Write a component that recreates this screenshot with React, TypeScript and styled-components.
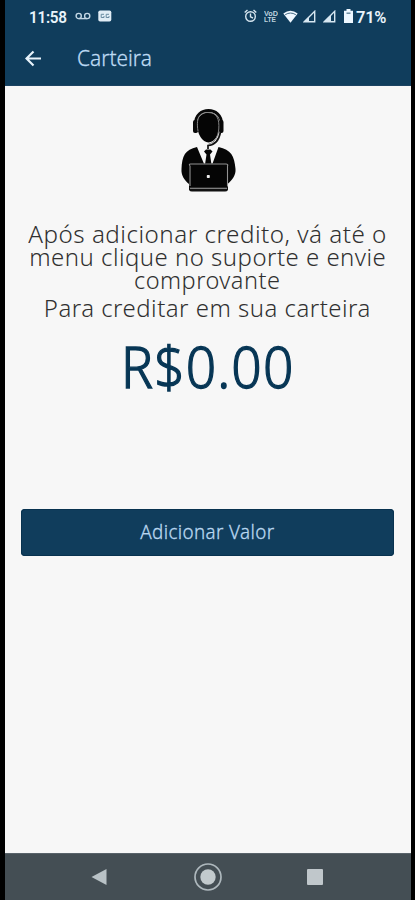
import React from "react";
import styled, { createGlobalStyle } from "styled-components";

const GlobalStyle = createGlobalStyle`
  * { box-sizing: border-box; }
  html, body { margin: 0; background: #000; overflow: hidden; }
  svg { display: block; }
`;

const Phone = styled.div`
  width: 415px;
  height: 900px;
  padding: 0 4px 0 5px;
  background: #000;
  font-family: "Noto Sans", "Open Sans", sans-serif;
`;

const Screen = styled.div`
  height: 100%;
  display: flex;
  flex-direction: column;
  background: #f7f7f7;
`;

const Header = styled.header`
  height: 86px;
  flex: none;
  background: #103d5c;
  border-bottom: 1px solid #1c4362;
`;

const StatusBar = styled.div`
  height: 34px;
  display: flex;
  align-items: center;
  padding: 0 25px 2px 24px;
  color: #e9f4fb;
`;

const StatusText = styled.span<{ $width: number; $scale: number }>`
  width: ${(p) => p.$width}px;
  font: 600 17px/34px Roboto, sans-serif;
  letter-spacing: -0.3px;
  white-space: nowrap;
  transform: translateY(1px) scaleX(${(p) => p.$scale});
  transform-origin: left;
`;

const StatusIcon = styled.svg<{ $gap: number }>`
  flex: none;
  margin-left: ${(p) => p.$gap}px;
`;

const Spacer = styled.div`
  flex: 1;
`;

const TitleBar = styled.div`
  height: 48px;
  display: flex;
  align-items: center;
  padding-left: 20px;
`;

const BackButton = styled.button`
  width: 52px;
  padding: 0;
  border: 0;
  background: none;
`;

const Fitted = styled.span<{ $size: number; $scale: number; $spacing?: number; $stroke?: number; $origin?: string }>`
  display: inline-block;
  font-size: ${(p) => p.$size}px;
  font-weight: 300;
  -webkit-text-stroke: ${(p) => p.$stroke ?? 0}px currentColor;
  letter-spacing: ${(p) => p.$spacing ?? 0}px;
  white-space: nowrap;
  transform: scaleX(${(p) => p.$scale});
  transform-origin: ${(p) => p.$origin ?? "center"};
`;

const Title = styled.h1`
  margin: 0 0 4px;
  line-height: 44px;
  color: #bddaf3;
`;

const Content = styled.main`
  flex: 1;
  display: flex;
  flex-direction: column;
  align-items: center;
  padding: 23px 16px 0 15px;
`;

const Message = styled.p<{ $top: number }>`
  margin: ${(p) => p.$top}px 0 0;
  display: flex;
  flex-direction: column;
  align-items: center;
  line-height: 23px;
  color: #303030;
`;

const Balance = styled.div`
  height: 70px;
  margin-top: 12px;
  line-height: 70px;
  color: #073655;
`;

const AddButton = styled.button`
  width: 373px;
  height: 47px;
  margin-top: 108px;
  padding: 0;
  border: 0;
  border-radius: 4px;
  background: #103d5c;
  box-shadow: inset 0 0 0 1px #08324f;
  color: #b9d7f0;
  font-family: inherit;
  line-height: 46px;
`;

const NavBar = styled.nav`
  height: 47px;
  flex: none;
  display: flex;
  align-items: center;
  background: #444e54;
  border-top: 1px solid #59636a;
  padding-left: 86px;
`;

const NavIcon = styled.svg<{ $gap: number }>`
  margin-left: ${(p) => p.$gap}px;
`;

function SupportAgent() {
  return (
    <svg width="60" height="84" viewBox="178 109 60 84">
      <path d="M197 147 204.500 165H189V184C184 180 181 175 181.500 169C182 156 185 149.500 197 147Z" fill="#060606" />
      <path d="M218.500 147 212 165H227.500V184C232.500 180 236 175 235.500 169C234.500 156 231 149.500 218.500 147Z" fill="#060606" />
      <path d="M206 149.500h4.500l2 2-2.500 3 1.500 10h-6.500l1.500-10-2.500-3Z" fill="#050505" />
      <path d="M195.500 124C195 106 222 106 221.500 124" fill="none" stroke="#080808" strokeWidth="2.800" />
      <rect x="193" y="120" width="5" height="13" rx="2" fill="#080808" />
      <rect x="219" y="120" width="4.500" height="13" rx="2" fill="#080808" />
      <path d="M197 124C197 108.500 220 108.500 220 124C220 134 214.500 142.500 208.500 142.500S197 134 197 124Z" fill="#050505" />
      <path d="M198 131C195.500 116 201 112.500 208 112.500C217 112.500 219.500 119 218.800 129C218 137 214.500 143 208.500 144" fill="none" stroke="#858585" strokeWidth="1" />
      <path d="M220.500 132C219 140 215 145 208 145.500V149" fill="none" stroke="#111" strokeWidth="1.700" />
      <path d="M189 187V166Q188.200 163.500 190.500 163.500H226Q228.500 163.500 227.700 166V187Z" fill="#050505" />
      <path d="M190 186V166Q188.500 164 190.500 164H226Q228.500 164 227.500 166V186" fill="none" stroke="#929292" strokeWidth="1.100" />
      <rect x="206.800" y="175" width="3" height="3" rx=".7" fill="#eee" />
      <path d="M189 187H228V190Q227 191.500 225 191.500H192Q190 191.500 189 190Z" fill="#111" />
      <path d="M190 188.300H227" stroke="#999" strokeWidth="1" />
    </svg>
  );
}

export default function App() {
  return (
    <Phone>
      <GlobalStyle />
      <Screen>
        <Header>
          <StatusBar>
            <StatusText $width={38} $scale={0.9}>11:58</StatusText>
            <StatusIcon $gap={8} width="16" height="10" viewBox="0 0 16 10" fill="none" stroke="#c3d7e5" strokeWidth="1.400">
              <circle cx="3.700" cy="5" r="2.600" />
              <circle cx="12.200" cy="5" r="2.600" />
              <path d="M3.700 7.600h8.500" />
            </StatusIcon>
            <StatusIcon $gap={7} width="14" height="12" viewBox="0 0 14 12">
              <rect x=".3" y=".5" width="13" height="11" rx="1.800" fill="#e1edf5" />
              <path d="M6 4.300H3.200v3.200H6V6M11 4.300H8.200v3.200H11V6" fill="none" stroke="#698ba1" />
            </StatusIcon>
            <Spacer />
            <StatusIcon $gap={0} width="13" height="14" viewBox="0 0 13 14" fill="none" stroke="#d5e5ef" strokeWidth="1.400">
              <circle cx="6.500" cy="7.500" r="4.800" />
              <path d="M.7 3.500 3.500 1M9.500 1l2.800 2.500M6.500 4.500v3.300L9 9" />
            </StatusIcon>
            <StatusIcon $gap={7} width="14" height="13" viewBox="0 0 14 13" fill="#bfd3df">
              <text x="0" y="6" fontFamily="Liberation Sans" fontSize="6.500" fontWeight="700" textLength="14" lengthAdjust="spacingAndGlyphs">VoD</text>
              <text x="0" y="12" fontFamily="Liberation Sans" fontSize="6.500" fontWeight="700" textLength="12" lengthAdjust="spacingAndGlyphs">LTE</text>
            </StatusIcon>
            <StatusIcon $gap={5} width="15" height="13" viewBox="0 0 15 13">
              <path d="M.3 3.500Q7.500-2 14.700 3.500L7.500 12.700Z" fill="#eff8ff" />
              <path d="M2.200 4.700Q7.500 1.400 12.800 4.700" fill="none" stroke="#436983" strokeWidth="1" />
            </StatusIcon>
            <StatusIcon $gap={5} width="13" height="13" viewBox="0 0 13 13">
              <path d="M1.300 11.700H11.700V1.300Z" fill="none" stroke="#d7e7f1" strokeWidth="1.400" />
              <path d="M6 7v4.700H1.300Z" fill="#d7e7f1" />
            </StatusIcon>
            <StatusIcon $gap={7} width="13" height="13" viewBox="0 0 13 13">
              <path d="M1.300 11.700H11.700V1.300Z" fill="none" stroke="#d7e7f1" strokeWidth="1.400" />
              <path d="M8 5v6.700H1.300Z" fill="#d7e7f1" />
            </StatusIcon>
            <StatusIcon $gap={8} width="9" height="14" viewBox="0 0 9 14">
              <path d="M2.500 0h4v1.700H9V14H0V1.700h2.500Z" fill="#edf7ff" />
              <path d="M2.500 4.200h4" stroke="#577b92" strokeWidth="1.300" />
            </StatusIcon>
            <StatusIcon as="span" $gap={3} />
            <StatusText $width={30} $scale={0.97}>71%</StatusText>
          </StatusBar>
          <TitleBar>
            <BackButton aria-label="Voltar">
              <svg width="17" height="17" viewBox="0 0 17 17" fill="none" stroke="#e8f3fb" strokeWidth="2.200">
                <path d="M16 8.500H2M8.500 1.500l-7 7 7 7" />
              </svg>
            </BackButton>
            <Title><Fitted $size={21.5} $scale={0.97} $stroke={0.3} $origin="left">Carteira</Fitted></Title>
          </TitleBar>
        </Header>
        <Content>
          <SupportAgent />
          <Message $top={29}>
            <Fitted $size={24.5} $scale={0.987} $spacing={0.5}>Após adicionar credito, vá até o</Fitted>
            <Fitted $size={24.5} $scale={0.977} $spacing={0.5}>menu clique no suporte e envie</Fitted>
            <Fitted $size={24.5} $scale={0.96} $spacing={0.5}>comprovante</Fitted>
          </Message>
          <Message $top={5}>
            <Fitted $size={24.5} $scale={0.977} $spacing={0.5}>Para creditar em sua carteira</Fitted>
          </Message>
          <Balance><Fitted $size={57} $scale={0.935} $stroke={1.3} $spacing={1.2}>R$0.00</Fitted></Balance>
          <AddButton><Fitted $size={20} $scale={0.94} $spacing={0.4} $stroke={0.3}>Adicionar Valor</Fitted></AddButton>
        </Content>
        <NavBar>
          <NavIcon $gap={0} width="16" height="18" viewBox="0 0 16 18"><path d="M.5 9 15.500 1v16Z" fill="#b9c2c6" /></NavIcon>
          <NavIcon $gap={86} width="30" height="30" viewBox="0 0 30 30">
            <circle cx="15" cy="15" r="13" fill="none" stroke="#aeb8bd" strokeWidth="1.700" />
            <circle cx="15" cy="15" r="7.700" fill="#c2cacd" />
          </NavIcon>
          <NavIcon $gap={84} width="16" height="16" viewBox="0 0 16 16"><rect width="16" height="16" rx="1" fill="#c0c7cb" /></NavIcon>
        </NavBar>
      </Screen>
    </Phone>
  );
}
